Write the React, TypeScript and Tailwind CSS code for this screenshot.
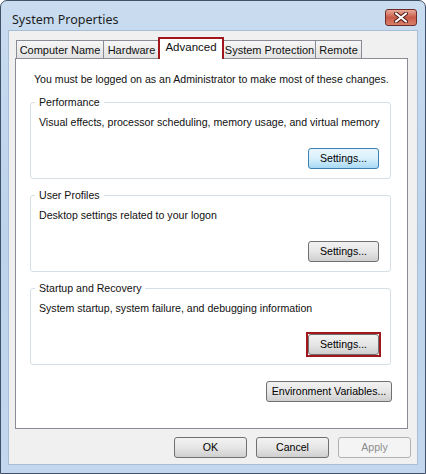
import type { ReactNode } from "react";

const tabs = [
  { label: "Computer Name", w: "w-[88px]" },
  { label: "Hardware", w: "w-[57px]" },
  { label: "Advanced", w: "w-[66px]", active: true },
  { label: "System Protection", w: "w-[93px]" },
  { label: "Remote", w: "w-[47px]" },
];

function Btn({ children, w = "w-[71px]", kind = "normal" }: { children: ReactNode; w?: string; kind?: "normal" | "hover" | "disabled" }) {
  const look =
    kind === "hover"
      ? "border-[#3c7fb1] bg-gradient-to-b from-[#eaf6fd] via-[#d9f0fc] to-[#a7d9f5] text-black"
      : kind === "disabled"
        ? "border-[#adb2b5] bg-[#f4f4f4] text-[#8d8d8d]"
        : "border-[#707070] bg-gradient-to-b from-[#f2f2f2] via-[#e6e6e6] to-[#cfcfcf] text-black";
  return (
    <div className={`${w} h-[21px] flex items-center justify-center whitespace-nowrap rounded-[3px] border ${look}`}>
      {children}
    </div>
  );
}

function Group({ title, desc, marked, hover }: { title: string; desc: string; marked?: boolean; hover?: boolean }) {
  return (
    <div className="relative h-[77px] rounded-[3px] border border-[#d5dfe5]">
      <div className="absolute -top-[8px] left-[4px] bg-white px-[4px] leading-[14px]">{title}</div>
      <div className="pl-[8px] pt-[12px] leading-[14px] whitespace-nowrap">{desc}</div>
      <div className="mt-[19px] mr-[11px] flex justify-end">
        {marked ? (
          <div className="-m-[2px] border-2 border-[#a2171d]">
            <Btn>Settings...</Btn>
          </div>
        ) : (
          <Btn kind={hover ? "hover" : "normal"}>Settings...</Btn>
        )}
      </div>
    </div>
  );
}

export default function App() {
  return (
    <div
      className="w-[426px] h-[474px] flex flex-col rounded-t-[7px] border border-[#3f5168] bg-gradient-to-b from-[#c9dcf0] via-[#bcd3eb] to-[#c3d8ee] text-[10.6px] text-[#111]"
      style={{ fontFamily: '"Liberation Sans", Arial, sans-serif' }}
    >
      <div className="h-[29px] flex items-center justify-between pl-[11px] pr-[8px]">
        <span className="pt-[9px] text-[12.5px] text-[#1e1e1e]" style={{ fontFamily: '"Noto Sans", "Open Sans", sans-serif' }}>
          System Properties
        </span>
        <div className="mt-[4px] w-[32px] h-[17px] rounded-[3px] border border-[#6b2b26] bg-gradient-to-b from-[#e9a99a] via-[#c85a48] to-[#d8806a] flex items-center justify-center">
          <svg width="14" height="11" viewBox="0 0 14 11">
            <path d="M2 1.5 L12 9.5 M12 1.5 L2 9.5" stroke="#4a1a14" strokeWidth="4" strokeLinecap="round" />
            <path d="M2 1.5 L12 9.5 M12 1.5 L2 9.5" stroke="#ffffff" strokeWidth="2.2" strokeLinecap="round" />
          </svg>
        </div>
      </div>

      <div className="mx-[7px] flex-1 mb-[8px] flex flex-col bg-[#f0f0f0] border border-[#a8bdd6]">
        <div className="flex pl-[7px] pt-[5px] h-[27px] items-end">
          {tabs.map((t) =>
            t.active ? (
              <div
                key={t.label}
                className={`${t.w} -mx-[1px] h-[22px] z-10 -mb-[1px] pb-[2px] flex items-center justify-center whitespace-nowrap bg-white border-2 border-[#a2171d] border-b-0 text-[11.5px]`}
              >
                {t.label}
              </div>
            ) : (
              <div
                key={t.label}
                className={`${t.w} h-[18px] pt-[1px] flex items-center justify-center whitespace-nowrap border border-b-0 border-[#898c95] bg-gradient-to-b from-[#f6f6f6] to-[#e2e2e2] -mr-[1px] text-[11px]`}
              >
                {t.label}
              </div>
            ),
          )}
        </div>

        <div className="ml-[6px] mr-[9px] h-[371px] border border-[#898c95] bg-white px-[14px] pt-[13px]">
          <div className="pl-[4px] leading-[14px] whitespace-nowrap">You must be logged on as an Administrator to make most of these changes.</div>
          <div className="mt-[16px] flex flex-col gap-[16px] mr-[2px]">
            <Group title="Performance" desc="Visual effects, processor scheduling, memory usage, and virtual memory" hover />
            <Group title="User Profiles" desc="Desktop settings related to your logon" />
            <Group title="Startup and Recovery" desc="System startup, system failure, and debugging information" marked />
          </div>
          <div className="mt-[16px] flex justify-end mr-[1px]">
            <Btn w="w-[126px]">Environment Variables...</Btn>
          </div>
        </div>

        <div className="mt-[8px] flex justify-end gap-[9px] pr-[6px]">
          <Btn w="w-[73px]">OK</Btn>
          <Btn w="w-[73px]">Cancel</Btn>
          <Btn w="w-[73px]" kind="disabled">Apply</Btn>
        </div>
      </div>
    </div>
  );
}
